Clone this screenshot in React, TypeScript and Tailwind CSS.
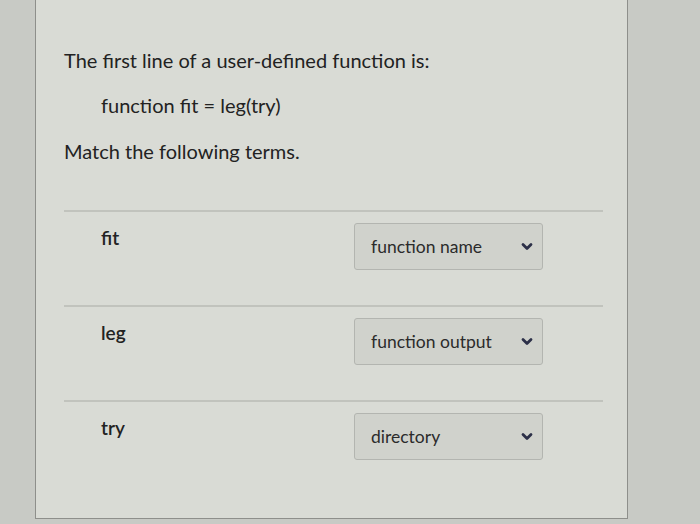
import React from 'react';

const rows = [
  { term: 'fit', answer: 'function name' },
  { term: 'leg', answer: 'function output' },
  { term: 'try', answer: 'directory' },
];

function Chevron() {
  return (
    <svg width="12" height="9" viewBox="0 0 12 9" className="shrink-0">
      <path d="M2 2.5 L6 6.5 L10 2.5" fill="none" stroke="#2c3048" strokeWidth="2.8" strokeLinecap="round" strokeLinejoin="round" />
    </svg>
  );
}

export default function App() {
  return (
    <div
      className="w-[700px] h-[524px] bg-[#c8cac5] pl-[35px] pr-[72px] overflow-hidden"
      style={{ fontFamily: 'Lato, "Open Sans", sans-serif' }}
    >
      <div className="h-[519px] bg-[#d9dbd5] border-x border-b border-[#8e8f8b] text-[#222]">
        <div className="pt-[46px] pl-[28px]">
          <p className="text-[20px] leading-[28px]">The first line of a user-defined function is:</p>
          <p className="text-[20px] leading-[28px] mt-[17px] pl-[37px]">function fit = leg(try)</p>
          <p className="text-[20px] leading-[28px] mt-[18px]">Match the following terms.</p>
        </div>

        <div className="mt-[45px] mx-[28px] mr-[24px]">
          {rows.map((r) => (
            <div key={r.term} className="border-t-2 border-[#c1c3bd] h-[95px] flex">
              <div className="w-[290px] pl-[37px] pt-[12px] text-[19px] font-semibold">{r.term}</div>
              <div className="pt-[11px]">
                <div className="w-[189px] h-[47px] rounded-[3px] border border-[#b3b5b0] bg-[#d0d2cc] flex items-center justify-between pl-[16px] pr-[9px]">
                  <span className="text-[17.5px] text-[#2b2b2b] mt-[2px]">{r.answer}</span>
                  <Chevron />
                </div>
              </div>
            </div>
          ))}
        </div>
      </div>
    </div>
  );
}
